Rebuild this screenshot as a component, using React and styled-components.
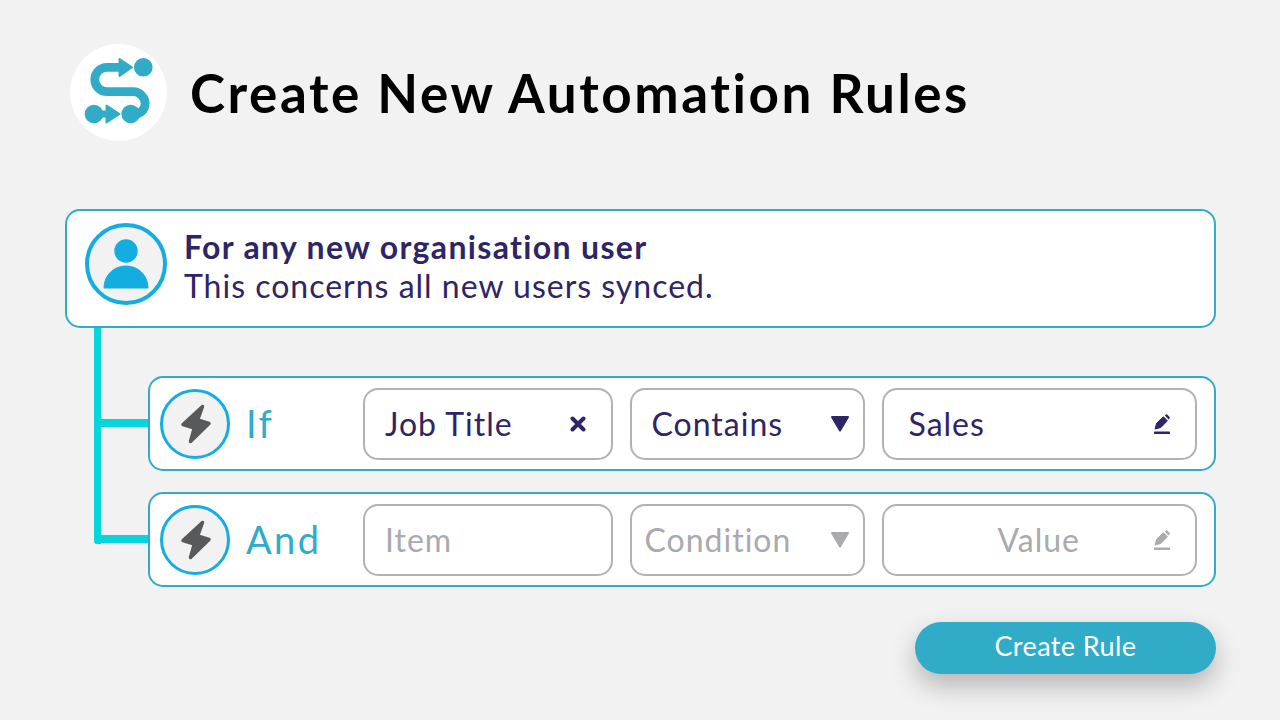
import React from 'react';
import styled, { createGlobalStyle } from 'styled-components';

const GlobalStyle = createGlobalStyle`
  html, body {
    margin: 0;
    padding: 0;
    background: #f2f2f2;
    font-family: "Lato", "Noto Sans", sans-serif;
  }
`;

const Page = styled.div`
  width: 1280px;
  height: 720px;
  box-sizing: border-box;
  padding: 44px 64px 0 65px;
  overflow: hidden;
`;

const Header = styled.header`
  display: flex;
  align-items: center;
  gap: 23px;
  padding-left: 5px;
  margin-bottom: 68px;
`;

const LogoDisc = styled.div`
  width: 97px;
  height: 97px;
  border-radius: 50%;
  background: #fff;
  flex: none;
`;

const Title = styled.h1`
  margin: 0;
  font-size: 53px;
  font-weight: 700;
  letter-spacing: 2.55px;
  color: #000;
  line-height: 1;
`;

const RuleCard = styled.section`
  display: flex;
  align-items: center;
  gap: 17px;
  box-sizing: border-box;
  height: 119px;
  padding: 0 0 9px 18px;
  background: #fff;
  border: 2px solid #30acc8;
  border-radius: 15px;
`;

const Badge = styled.div`
  width: ${p => p.$size}px;
  height: ${p => p.$size}px;
  box-sizing: border-box;
  border: ${p => p.$stroke}px solid #14addf;
  border-radius: 50%;
  background: #f2f2f2;
  flex: none;
  display: flex;
  align-items: center;
  justify-content: center;
`;

const RuleText = styled.div`
  padding-top: 3px;
  color: #2e2566;
  font-size: 32px;
  line-height: 39px;
  letter-spacing: 1px;
`;

const RuleHeading = styled.div`
  font-weight: 700;
  letter-spacing: 1.35px;
`;

const Tree = styled.div`
  position: relative;
  display: flex;
  flex-direction: column;
  gap: 21px;
  padding: 48px 0 0 82.5px;

  &::before {
    content: '';
    position: absolute;
    left: 28.5px;
    top: 0;
    width: 7.5px;
    height: 216px;
    background: #06d6dc;
    border-radius: 0 0 0 3px;
  }
`;

const ConditionRow = styled.div`
  position: relative;
  display: grid;
  grid-template-columns: 186.5px 250px 235.5px 315px;
  column-gap: 16.5px;
  align-items: center;
  box-sizing: border-box;
  height: 95px;
  padding-left: 10.5px;
  background: #fff;
  border: 2px solid #30acc8;
  border-radius: 15px;

  &::before {
    content: '';
    position: absolute;
    left: -52px;
    top: 41px;
    width: 50.5px;
    height: 8px;
    background: #06d6dc;
  }
`;

const Lead = styled.div`
  display: flex;
  align-items: center;
  gap: 16px;
`;

const Keyword = styled.span`
  padding-bottom: 2px;
  font-size: 38px;
  letter-spacing: 2.4px;
  color: #30acc8;
`;

const Field = styled.div`
  display: flex;
  align-items: center;
  justify-content: space-between;
  box-sizing: border-box;
  height: 72px;
  padding: 0 ${p => p.$right ?? 25}px 0 ${p => p.$left ?? 20}px;
  background: #fff;
  border: 2px solid #b1b1b6;
  border-radius: 15px;
  font-size: 32px;
  letter-spacing: 1px;
  color: ${p => (p.$muted ? '#a9a9ae' : '#2e2566')};
`;

const Footer = styled.div`
  display: flex;
  justify-content: flex-end;
  margin-top: 35px;
`;

const CreateButton = styled.button`
  width: 301px;
  height: 52px;
  padding: 0 0 6px;
  border: none;
  border-radius: 26px;
  background: #30acc8;
  color: #fff;
  font-family: inherit;
  font-size: 27px;
  letter-spacing: 0.4px;
  box-shadow: 0 12px 26px rgba(0, 0, 0, 0.25);
`;

const Logo = () => (
  <LogoDisc>
    <svg width="97" height="97" viewBox="0 0 97 97">
      <g fill="#30acc8" stroke="#30acc8" strokeLinejoin="round">
        <circle cx="73.3" cy="23.3" r="9.3" stroke="none" />
        <circle cx="24" cy="70" r="9.3" stroke="none" />
        <circle cx="60.7" cy="70" r="9.3" stroke="none" />
        <path d="M49.5 15 V32 L62 23.3 Z" strokeWidth="2" />
        <path d="M36.5 61.5 V78.5 L49.5 70 Z" strokeWidth="2" />
        <path d="M30 70 H38" strokeWidth="7" fill="none" />
        <path
          d="M50 23.3 H37 a12.2 12.2 0 0 0 0 24.4 H63 a12.2 12.2 0 0 1 12.2 12.2 V59 a11 11 0 0 1 -14 11"
          strokeWidth="8.8"
          fill="none"
        />
      </g>
    </svg>
  </LogoDisc>
);

const UserIcon = () => (
  <svg width="46" height="52" viewBox="0 0 46 52">
    <circle cx="23" cy="13" r="11.7" fill="#14addf" />
    <path d="M1 50 C1 37 11 28 23 28 C35 28 45 37 45 50 Z" fill="#14addf" stroke="#14addf" strokeLinejoin="round" />
  </svg>
);

const BoltIcon = () => (
  <svg width="63" height="63" viewBox="3.5 3.5 63 63">
    <path
      d="M42 18 L22.5 36 L33.8 39.5 L30 53 L48.5 35 L37.2 31.5 Z"
      fill="#58595b"
      stroke="#58595b"
      strokeWidth="3.5"
      strokeLinejoin="round"
    />
  </svg>
);

const ClearIcon = () => (
  <svg width="16" height="16" viewBox="0 0 16 16">
    <path d="M2.5 2.5 L13.5 13.5 M13.5 2.5 L2.5 13.5" stroke="#2e2566" strokeWidth="4" strokeLinecap="round" />
  </svg>
);

const CaretIcon = ({ color }) => (
  <svg width="20" height="18" viewBox="0 0 20 18">
    <path d="M2 2 H18 L10 15.5 Z" fill={color} stroke={color} strokeWidth="2" strokeLinejoin="round" />
  </svg>
);

const PenIcon = ({ color }) => (
  <svg width="18" height="22" viewBox="0 0 18 22">
    <path d="M2 16 L3.7 10.2 L10.4 3.8 L14.4 7.8 L7.9 14.4 Z" fill={color} stroke={color} strokeLinejoin="round" />
    <path d="M11.8 2.6 L12.9 1.6 A1 1 0 0 1 14.2 1.6 L16.6 4 A1 1 0 0 1 16.6 5.3 L15.6 6.4 Z" fill={color} />
    <rect x="1" y="18.6" width="16" height="2.4" rx="0.6" fill={color} />
  </svg>
);

const BoltBadge = () => (
  <Badge $size={70} $stroke={3.5}>
    <BoltIcon />
  </Badge>
);

export default function App() {
  return (
    <Page>
      <GlobalStyle />
      <Header>
        <Logo />
        <Title>Create New Automation Rules</Title>
      </Header>

      <RuleCard>
        <Badge $size={82} $stroke={4}>
          <UserIcon />
        </Badge>
        <RuleText>
          <RuleHeading>For any new organisation user</RuleHeading>
          <div>This concerns all new users synced.</div>
        </RuleText>
      </RuleCard>

      <Tree>
        <ConditionRow>
          <Lead>
            <BoltBadge />
            <Keyword>If</Keyword>
          </Lead>
          <Field>
            Job Title
            <ClearIcon />
          </Field>
          <Field $right={13}>
            Contains
            <CaretIcon color="#2e2566" />
          </Field>
          <Field $left={25} $right={24}>
            Sales
            <PenIcon color="#2e2566" />
          </Field>
        </ConditionRow>
        <ConditionRow>
          <Lead>
            <BoltBadge />
            <Keyword>And</Keyword>
          </Lead>
          <Field $muted>
            Item
          </Field>
          <Field $muted $left={13} $right={13}>
            Condition
            <CaretIcon color="#a9a9ae" />
          </Field>
          <Field $muted $left={114} $right={24}>
            Value
            <PenIcon color="#a9a9ae" />
          </Field>
        </ConditionRow>
      </Tree>

      <Footer>
        <CreateButton>Create Rule</CreateButton>
      </Footer>
    </Page>
  );
}
